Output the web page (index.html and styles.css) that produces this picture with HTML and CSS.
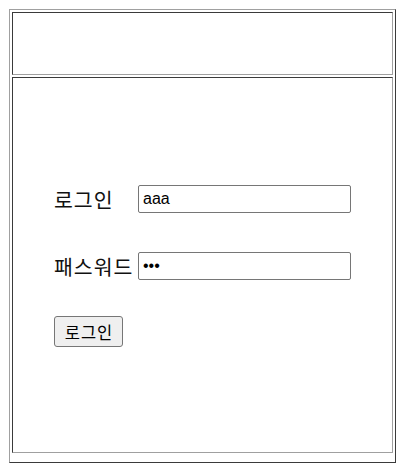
FILE: index.html
```
<!DOCTYPE html>
<html lang="ko">
<head>
<meta charset="utf-8">
<title>로그인</title>
<link rel="stylesheet" href="styles.css">
</head>
<body>
<div class="frame">
  <div class="cell header"></div>
  <div class="cell main">
    <form class="login">
      <label class="label" for="uid">로그인</label>
      <input class="field" id="uid" type="text" value="aaa">
      <label class="label" for="pw">패스워드</label>
      <input class="field" id="pw" type="password" value="aaa">
      <button class="btn" type="button">로그인</button>
    </form>
  </div>
</div>
</body>
</html>
```
FILE: styles.css
```
html, body {
  margin: 0;
  padding: 0;
  background: #fff;
}
body {
  padding: 9px 0 0 9px;
  font-family: "Noto Sans CJK KR", "Noto Sans", sans-serif;
}
.frame {
  box-sizing: border-box;
  width: 387px;
  height: 454px;
  border: 1px solid;
  border-color: #a0a0a0 #3a3a3a #3a3a3a #a0a0a0;
  padding: 2px 2px 9px 2px;
  display: flex;
  flex-direction: column;
  gap: 2px;
}
.cell {
  box-sizing: border-box;
  border: 1px solid;
  border-color: #3a3a3a #a0a0a0 #a0a0a0 #3a3a3a;
}
.header {
  height: 63px;
  flex: none;
}
.main {
  flex: 1;
  display: flex;
  align-items: center;
  justify-content: center;
}
.login {
  display: grid;
  grid-template-columns: 80px 213px;
  column-gap: 4px;
  row-gap: 39px;
  align-items: center;
  margin: 0;
  transform: translateY(1px);
}
.label {
  font-size: 20.5px;
  letter-spacing: 1px;
  line-height: 28px;
  color: #111;
  white-space: nowrap;
}
.field {
  box-sizing: border-box;
  width: 213px;
  height: 28px;
  margin: 0;
  border: 1px solid #767676;
  border-radius: 2px;
  padding: 0 4px;
  font-family: "Liberation Sans", Arial, sans-serif;
  font-size: 16px;
  color: #000;
  background: #fff;
}
.btn {
  grid-column: 1 / 2;
  justify-self: start;
  margin-top: -3px;
  box-sizing: border-box;
  width: 69px;
  height: 31px;
  padding: 0;
  border: 1px solid #767676;
  border-radius: 3px;
  background: #efefef;
  font-family: "Noto Sans CJK KR", sans-serif;
  font-size: 16.5px;
  letter-spacing: 1px;
  text-indent: 1px;
  color: #000;
  white-space: nowrap;
}
```
